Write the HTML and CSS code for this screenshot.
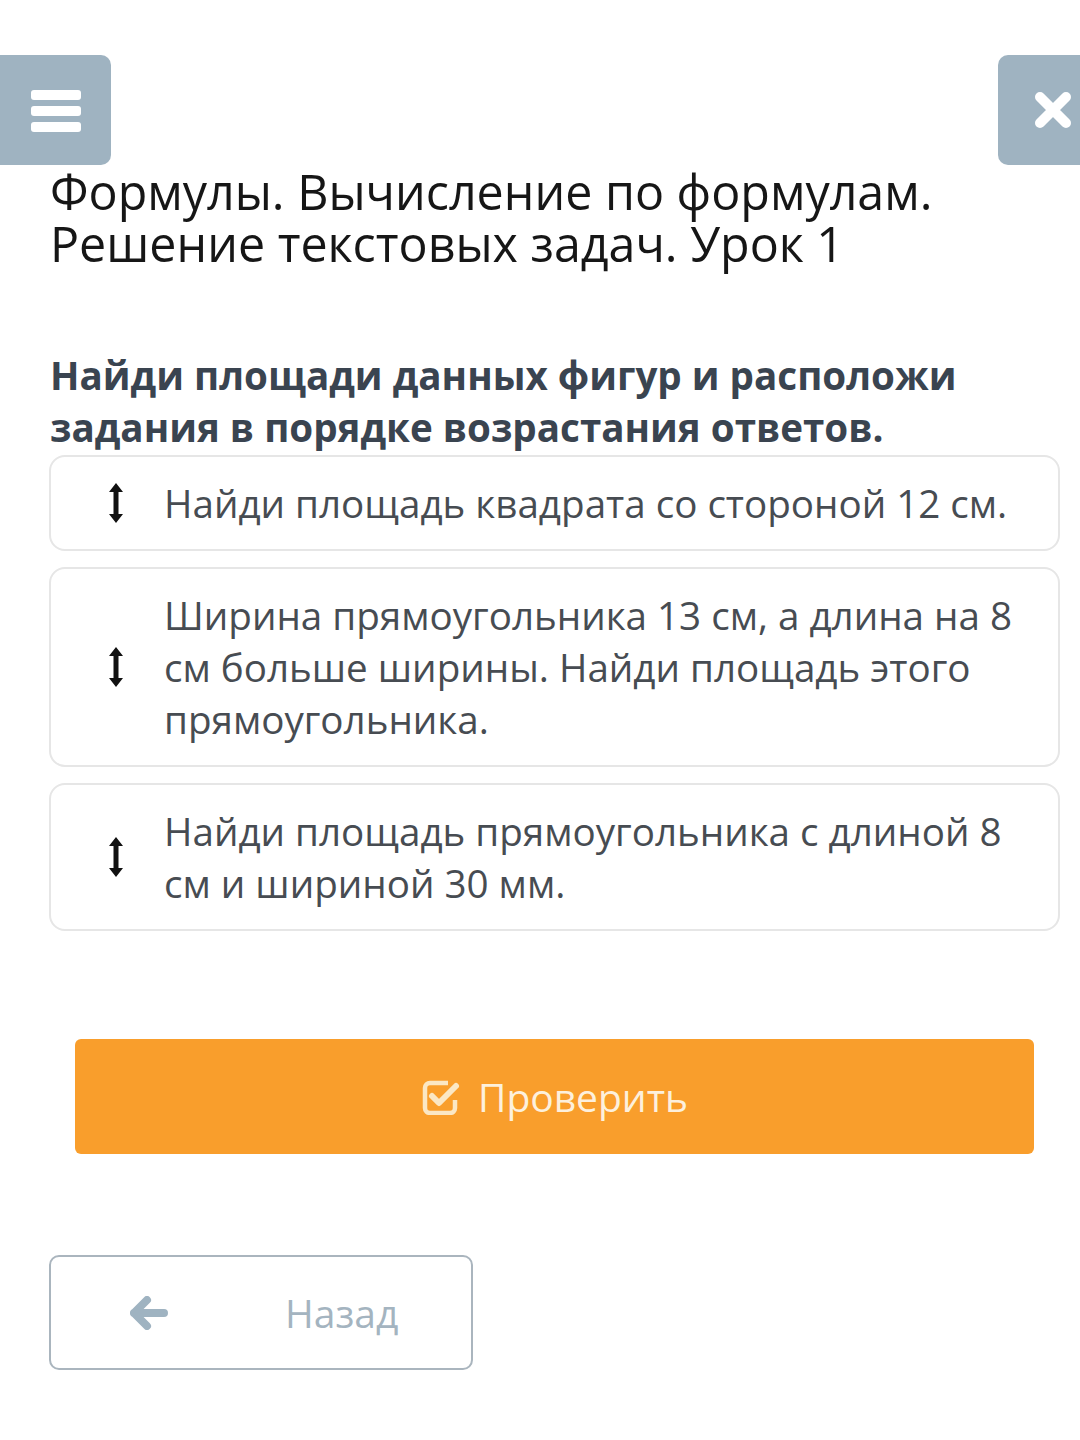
FILE: index.html
```html
<!DOCTYPE html>
<html lang="ru">
<head>
    <meta charset="UTF-8">
    <meta name="viewport" content="width=device-width, initial-scale=1.0">
    <title>Формулы. Урок 1</title>
    <link rel="stylesheet" href="styles.css">
</head>
<body>

    <div class="topbar">
        <button class="menu-btn" aria-label="Меню">
            <svg width="50" height="44" viewBox="0 0 50 44">
                <rect x="0" y="2" width="50" height="10" rx="3" fill="#fff"/>
                <rect x="0" y="18" width="50" height="10" rx="3" fill="#fff"/>
                <rect x="0" y="34" width="50" height="10" rx="3" fill="#fff"/>
            </svg>
        </button>
        <button class="close-btn" aria-label="Закрыть">
            <svg width="40" height="40" viewBox="0 0 40 40">
                <path d="M7 7 L33 33 M33 7 L7 33" stroke="#fff" stroke-width="10" stroke-linecap="round"/>
            </svg>
        </button>
    </div>

    <h1 class="title">Формулы. Вычисление по формулам. Решение текстовых задач. Урок 1</h1>

    <p class="question">Найди площади данных фигур и расположи задания в порядке возрастания ответов.</p>

    <div class="items">
        <div class="item">
            <span class="drag">
                <svg width="16" height="40" viewBox="0 0 16 40">
                    <path d="M8 0 L15 9 L10.5 9 L10.5 31 L15 31 L8 40 L1 31 L5.5 31 L5.5 9 L1 9 Z" fill="#111"/>
                </svg>
            </span>
            <span class="item-text">Найди площадь квадрата со стороной 12 см.</span>
        </div>
        <div class="item">
            <span class="drag">
                <svg width="16" height="40" viewBox="0 0 16 40">
                    <path d="M8 0 L15 9 L10.5 9 L10.5 31 L15 31 L8 40 L1 31 L5.5 31 L5.5 9 L1 9 Z" fill="#111"/>
                </svg>
            </span>
            <span class="item-text">Ширина прямоугольника 13 см, а длина на 8 см больше ширины. Найди площадь этого прямоугольника.</span>
        </div>
        <div class="item">
            <span class="drag">
                <svg width="16" height="40" viewBox="0 0 16 40">
                    <path d="M8 0 L15 9 L10.5 9 L10.5 31 L15 31 L8 40 L1 31 L5.5 31 L5.5 9 L1 9 Z" fill="#111"/>
                </svg>
            </span>
            <span class="item-text">Найди площадь прямоугольника с длиной 8 см и шириной 30 мм.</span>
        </div>
    </div>

    <button class="check-btn">
        <svg width="40" height="36" viewBox="0 0 40 36">
            <path d="M27 4 H9 a5 5 0 0 0 -5 5 V29 a5 5 0 0 0 5 5 H29 a5 5 0 0 0 5 -5 V21" fill="none" stroke="#fbe7c4" stroke-width="4.5"/>
            <path d="M11 17 L18 24 L35 7" fill="none" stroke="#fbe7c4" stroke-width="6" stroke-linecap="round" stroke-linejoin="round"/>
        </svg>
        <span>Проверить</span>
    </button>

    <button class="back-btn">
        <svg width="38" height="34" viewBox="0 0 38 34">
            <path d="M17 4 L4 17 L17 30 M4 17 H34" fill="none" stroke="#9fb3c1" stroke-width="8" stroke-linecap="round" stroke-linejoin="round"/>
        </svg>
        <span>Назад</span>
    </button>

</body>
</html>
```

FILE: styles.css
```css
body {
    margin: 0;
    font-family: 'Open Sans', 'Noto Sans', sans-serif;
    background-color: #fff;
    color: #1b1b1b;
    overflow-x: hidden;
}

button {
    font-family: inherit;
    cursor: pointer;
}

.topbar {
    display: flex;
    justify-content: space-between;
    padding-top: 55px;
}

.menu-btn, .close-btn {
    height: 110px;
    border: none;
    background-color: #9fb3c1;
    display: flex;
    align-items: center;
    justify-content: center;
    padding: 0;
}

.menu-btn {
    width: 111px;
    border-radius: 0 10px 10px 0;
}

.close-btn {
    width: 82px;
    border-radius: 10px 0 0 10px;
    justify-content: flex-start;
    padding-left: 35px;
}

.title {
    margin: 0 40px 0 50px;
    font-size: 48.4px;
    line-height: 52px;
    font-weight: 400;
    color: #161616;
}

.question {
    margin: 80px 40px 2px 50px;
    font-size: 38.6px;
    line-height: 52px;
    font-weight: 700;
    color: #3a4450;
}

.items {
    display: flex;
    flex-direction: column;
    gap: 16px;
    margin: 0 20px 0 49px;
}

.item {
    display: flex;
    align-items: center;
    gap: 40px;
    padding: 20px 36px 20px 57px;
    border: 2px solid #e6e6e6;
    border-radius: 16px;
    background-color: #fff;
}

.drag {
    flex: 0 0 16px;
    display: flex;
}

.item-text {
    font-size: 38.6px;
    line-height: 52px;
    color: #474c52;
}

.check-btn {
    display: flex;
    align-items: center;
    justify-content: center;
    gap: 17px;
    width: 959px;
    height: 115px;
    margin: 108px 0 0 75px;
    border: none;
    border-radius: 6px;
    background-color: #f99e2c;
    color: #fdf0dc;
    font-size: 39px;
}

.back-btn {
    display: flex;
    align-items: center;
    gap: 117px;
    width: 424px;
    height: 115px;
    margin: 101px 0 0 49px;
    padding: 0 0 0 79px;
    border: 2px solid #aab5be;
    border-radius: 10px;
    background-color: #fff;
    color: #a4b4c0;
    font-size: 39px;
}
```
